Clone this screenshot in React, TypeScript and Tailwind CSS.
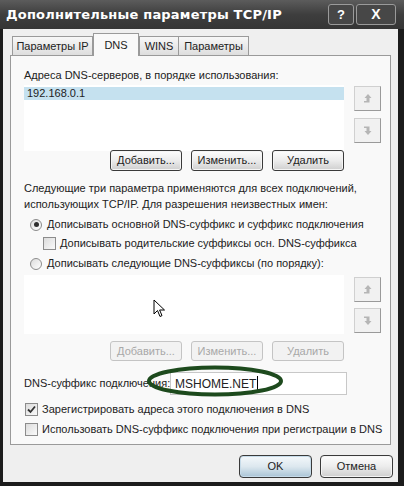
import React from "react";

const font = { fontFamily: '"Liberation Sans", Arial, sans-serif' };

function Btn({ children, disabled, primary, className = "" }: { children: React.ReactNode; disabled?: boolean; primary?: boolean; className?: string }) {
  return (
    <div
      className={
        "flex items-center justify-center rounded-[3px] border text-[11px] " +
        (disabled
          ? "border-[#c4c4c4] bg-[#f2f2f2] text-[#a8a8a8] "
          : primary
          ? "border-[#3a3a3a] bg-gradient-to-b from-[#f4f8fb] via-[#dde8ef] to-[#a9c4d6] text-[#222] shadow-[inset_0_0_0_1px_#c6dbe9] "
          : "border-[#3a3a3a] bg-gradient-to-b from-[#fdfdfd] via-[#ececec] to-[#cfcfcf] text-[#222] shadow-[inset_0_0_0_1px_#f5f5f5] ") +
        className
      }
    >
      {children}
    </div>
  );
}

function Arrow({ down }: { down?: boolean }) {
  return (
    <svg width="11" height="11" viewBox="0 0 11 11" style={{ transform: down ? "scaleY(-1)" : undefined }}>
      <path d="M6 1 L9.5 5 L7.5 5 L7.5 9.5 L2 9.5 L2 8 L4.5 8 L4.5 5 L2.5 5 Z" fill="#b5b5b5" />
    </svg>
  );
}

function ArrowBtn({ down }: { down?: boolean }) {
  return (
    <div className="flex h-[25px] w-[27px] items-center justify-center border border-[#d0d0d0] border-b-[#9a9a9a] border-r-[#9a9a9a] bg-[#f1f1f1]">
      <Arrow down={down} />
    </div>
  );
}

function Radio({ checked }: { checked?: boolean }) {
  return (
    <div className="flex h-[12px] w-[12px] shrink-0 items-center justify-center rounded-full border border-[#8c8c8c] bg-gradient-to-br from-[#dcdcdc] to-[#ffffff]">
      {checked && <div className="h-[5px] w-[5px] rounded-full bg-[#2d2d2d]" />}
    </div>
  );
}

function Check({ checked }: { checked?: boolean }) {
  return (
    <div className="flex h-[13px] w-[13px] shrink-0 items-center justify-center border border-[#8c8c8c] bg-gradient-to-br from-[#dcdcdc] to-[#fafafa]">
      {checked && (
        <svg width="9" height="9" viewBox="0 0 9 9">
          <path d="M1 4.5 L3.5 7 L8 1.5" stroke="#333" strokeWidth="1.8" fill="none" />
        </svg>
      )}
    </div>
  );
}

export default function App() {
  return (
    <div className="relative h-[486px] w-[404px] overflow-hidden whitespace-nowrap bg-[#1c1c1c] pb-[4px] pl-[3px] pr-[6px]" style={font}>
      {/* title bar */}
      <div className="ml-[-3px] mr-[-6px] flex h-[29px] items-center justify-between bg-gradient-to-b from-[#5c5c5c] via-[#3e3e3e] to-[#353535] pl-[6px] pr-[8px]">
        <span className="font-bold tracking-[0.2px] text-white" style={{ fontFamily: '"DejaVu Sans", sans-serif', fontSize: 13 }}>
          Дополнительные параметры TCP/IP
        </span>
        <div className="flex gap-[2px]">
          <div className="flex h-[21px] w-[26px] items-center justify-center rounded-[3px] border border-[#9a9a9a] bg-[#474747] text-[13px] font-bold text-white">?</div>
          <div className="flex h-[21px] w-[40px] items-center justify-center rounded-[3px] border border-[#9a9a9a] bg-[#474747] text-[14px] font-bold text-white">X</div>
        </div>
      </div>
      {/* body */}
      <div className="flex h-[453px] flex-col bg-[#efefef] px-[7px] pt-[4px]">
        {/* tabs */}
        <div className="flex h-[22px] items-end pl-[2px] text-[11px] text-[#222]">
          <div className="flex h-[19px] w-[81px] items-center justify-center border border-b-0 border-[#9a9a9a] bg-gradient-to-b from-[#f7f7f7] to-[#dedede]">Параметры IP</div>
          <div className="relative z-10 mb-[-1px] flex h-[23px] w-[46px] items-start justify-center border border-b-0 border-[#9a9a9a] bg-[#f9f9f9] pt-[3px]">DNS</div>
          <div className="flex h-[19px] w-[40px] items-center justify-center border border-b-0 border-[#9a9a9a] bg-gradient-to-b from-[#f7f7f7] to-[#dedede]">WINS</div>
          <div className="flex h-[19px] w-[70px] items-center justify-center border border-b-0 border-l-0 border-[#9a9a9a] bg-gradient-to-b from-[#f7f7f7] to-[#dedede]">Параметры</div>
        </div>
        {/* panel */}
        <div className="flex h-[390px] flex-col border border-[#9a9a9a] bg-[#f9f9f9] pl-[13px] pt-[11px] text-[11px] text-[#222]">
          <div className="h-[16px] leading-[16px]">Адреса DNS-серверов, в порядке использования:</div>
          <div className="mt-[2px] flex">
            <div className="h-[66px] w-[320px] bg-white">
              <div className="mt-[2px] h-[13px] bg-[#c5e1ef] pl-[3px] leading-[13px]">192.168.0.1</div>
            </div>
            <div className="ml-[10px] flex flex-col gap-[7px] pt-[1px]">
              <ArrowBtn />
              <ArrowBtn down />
            </div>
          </div>
          <div className="mt-[-1px] flex w-[320px] justify-end gap-[9px]">
            <Btn className="h-[21px] w-[72px]">Добавить...</Btn>
            <Btn className="h-[21px] w-[72px]">Изменить...</Btn>
            <Btn className="h-[21px] w-[72px]">Удалить</Btn>
          </div>
          <div className="mt-[9px] leading-[16px]">
            Следующие три параметра применяются для всех подключений,
            <br />
            использующих TCP/IP. Для разрешения неизвестных имен:
          </div>
          <div className="mt-[3px] flex h-[19px] items-center gap-[5px] pl-[6px]">
            <Radio checked />
            <span>Дописывать основной DNS-суффикс и суффикс подключения</span>
          </div>
          <div className="flex h-[19px] items-center gap-[4px] pl-[19px]">
            <Check />
            <span>Дописывать родительские суффиксы осн. DNS-суффикса</span>
          </div>
          <div className="flex h-[21px] items-center gap-[5px] pl-[6px]">
            <Radio />
            <span>Дописывать следующие DNS-суффиксы (по порядку):</span>
          </div>
          <div className="mt-[1px] flex">
            <div className="h-[59px] w-[320px] bg-white" />
            <div className="ml-[10px] flex flex-col gap-[6px] pt-[2px]">
              <ArrowBtn />
              <ArrowBtn down />
            </div>
          </div>
          <div className="mt-[7px] flex w-[320px] justify-end gap-[9px]">
            <Btn disabled className="h-[20px] w-[72px]">Добавить...</Btn>
            <Btn disabled className="h-[20px] w-[72px]">Изменить...</Btn>
            <Btn disabled className="h-[20px] w-[72px]">Удалить</Btn>
          </div>
          <div className="mt-[11px] flex h-[23px] items-center">
            <span className="w-[146px]">DNS-суффикс подключения:</span>
            <div className="flex h-[23px] w-[177px] items-center border border-[#c8c8c8] bg-white pl-[4px] text-[12px]">
              MSHOME.NET<span className="ml-[1px] inline-block h-[15px] w-[1px] bg-black" />
            </div>
          </div>
          <div className="mt-[5px] flex h-[19px] items-center gap-[4px] pl-[1px]">
            <Check checked />
            <span>Зарегистрировать адреса этого подключения в DNS</span>
          </div>
          <div className="flex h-[20px] items-center gap-[4px] pl-[1px]">
            <Check />
            <span>Использовать DNS-суффикс подключения при регистрации в DNS</span>
          </div>
        </div>
        {/* footer */}
        <div className="mt-[10px] mr-[-2px] flex justify-end gap-[8px]">
          <Btn primary className="h-[23px] w-[73px] rounded-[4px]">OK</Btn>
          <Btn className="h-[23px] w-[73px] rounded-[4px]">Отмена</Btn>
        </div>
      </div>
      {/* green ellipse annotation */}
      <svg className="pointer-events-none absolute left-[145px] top-[364px]" width="140" height="34" viewBox="0 0 140 34">
        <ellipse cx="70" cy="17" rx="66" ry="13.5" fill="none" stroke="#1d4a1d" strokeWidth="4" />
      </svg>
      {/* mouse pointer */}
      <svg className="pointer-events-none absolute left-[153px] top-[299px]" width="13" height="20" viewBox="0 0 13 20">
        <path d="M1 1 L1 15 L4.5 11.5 L7 17.5 L9 16.6 L6.6 11 L11.5 11 Z" fill="white" stroke="black" strokeWidth="1" />
      </svg>
    </div>
  );
}
